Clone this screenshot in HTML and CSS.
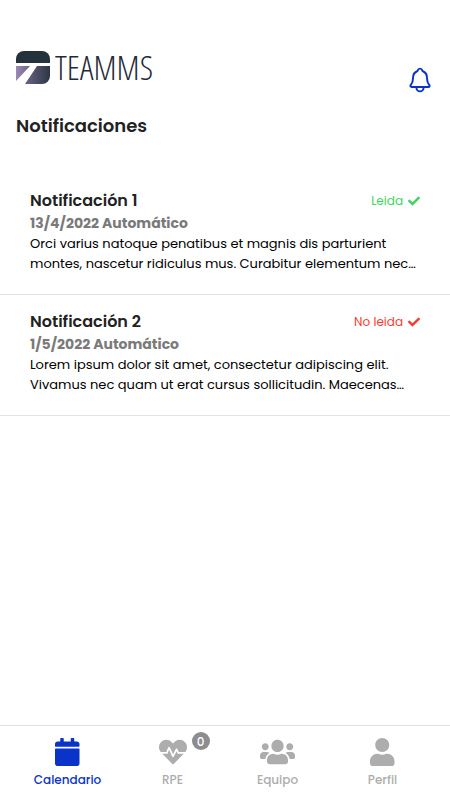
FILE: index.html
```html
<!DOCTYPE html>
<html lang="es">
  <head>
    <meta charset="utf-8" />
    <meta name="viewport" content="width=device-width, initial-scale=1" />
    <title>Notificaciones</title>
    <link rel="stylesheet" href="styles.css">
  </head>
  <body>
    <header class="header">
      <div class="brand">
        <svg class="brand-mark" viewBox="0 0 34 34" aria-hidden="true">
          <defs>
            <linearGradient id="mark-top" x1="0" y1="0" x2="1" y2="1">
              <stop offset="0" stop-color="#22303a" />
              <stop offset="1" stop-color="#26343f" />
            </linearGradient>
            <linearGradient id="mark-left" x1="0" y1="0" x2="1" y2="0">
              <stop offset="0" stop-color="#9c8bb4" />
              <stop offset="1" stop-color="#6a6284" />
            </linearGradient>
            <linearGradient id="mark-right" x1="0" y1="0" x2="1" y2="0">
              <stop offset="0" stop-color="#6c6384" />
              <stop offset="1" stop-color="#2b3745" />
            </linearGradient>
          </defs>
          <path fill="url(#mark-top)" d="M0 13V9a8 8 0 0 1 8-8h18a8 8 0 0 1 8 8v4z" />
          <path fill="url(#mark-left)" d="M0 16h14L0 31z" />
          <path fill="url(#mark-right)" d="M21 16h13v10a8 8 0 0 1-8 8H9z" />
        </svg>
        <span class="brand-name">TEAMMS</span>
      </div>
      <button class="bell-button" type="button" aria-label="Notificaciones">
        <svg class="bell-icon" viewBox="0 0 512 512" aria-hidden="true">
          <path d="M427.68 351.43C402 320 383.87 304 383.87 217.35 383.87 138 343.35 109.73 310 96c-4.43-1.82-8.6-6-9.95-10.55C294.2 65.54 277.8 48 256 48s-38.21 17.55-44 37.47c-1.35 4.6-5.52 8.71-9.95 10.53-33.39 13.75-73.87 41.92-73.87 121.35C128.13 304 110 320 84.32 351.43 73.68 364.45 83 384 101.61 384h308.88c18.51 0 27.77-19.61 17.19-32.57zM320 384v16a64 64 0 01-128 0v-16" />
        </svg>
      </button>
    </header>

    <main class="content">
      <h1 class="page-title">Notificaciones</h1>
      <ul class="notification-list">
        <li class="notification">
          <div class="notification-head">
            <h2 class="notification-title">Notificación 1</h2>
            <span class="status status-read">
              Leida
              <svg class="status-icon" viewBox="0 0 512 512" aria-hidden="true">
                <path d="M173.898 439.404l-166.4-166.4c-9.997-9.997-9.997-26.206 0-36.204l36.203-36.204c9.997-9.998 26.207-9.998 36.204 0L192 312.69 432.095 72.596c9.997-9.997 26.207-9.997 36.204 0l36.203 36.204c9.997 9.997 9.997 26.206 0 36.204l-294.4 294.401c-9.998 9.997-26.207 9.997-36.204-.001z" />
              </svg>
            </span>
          </div>
          <p class="notification-date">13/4/2022 Automático</p>
          <p class="notification-text">Orci varius natoque penatibus et magnis dis parturient montes, nascetur ridiculus mus. Curabitur elementum nec…</p>
        </li>
        <li class="notification">
          <div class="notification-head">
            <h2 class="notification-title">Notificación 2</h2>
            <span class="status status-unread">
              No leida
              <svg class="status-icon" viewBox="0 0 512 512" aria-hidden="true">
                <path d="M173.898 439.404l-166.4-166.4c-9.997-9.997-9.997-26.206 0-36.204l36.203-36.204c9.997-9.998 26.207-9.998 36.204 0L192 312.69 432.095 72.596c9.997-9.997 26.207-9.997 36.204 0l36.203 36.204c9.997 9.997 9.997 26.206 0 36.204l-294.4 294.401c-9.998 9.997-26.207 9.997-36.204-.001z" />
              </svg>
            </span>
          </div>
          <p class="notification-date">1/5/2022 Automático</p>
          <p class="notification-text">Lorem ipsum dolor sit amet, consectetur adipiscing elit. Vivamus nec quam ut erat cursus sollicitudin. Maecenas…</p>
        </li>
      </ul>
    </main>

    <nav class="tab-bar">
      <a class="tab active" href="#calendario">
        <svg class="tab-icon" viewBox="0 0 448 512" aria-hidden="true">
          <path d="M12 192h424c6.6 0 12 5.4 12 12v260c0 26.5-21.5 48-48 48H48c-26.5 0-48-21.5-48-48V204c0-6.6 5.4-12 12-12zm436-44v-36c0-26.5-21.5-48-48-48h-48V12c0-6.6-5.4-12-12-12h-40c-6.6 0-12 5.4-12 12v52H160V12c0-6.6-5.4-12-12-12h-40c-6.6 0-12 5.4-12 12v52H48C21.5 64 0 85.5 0 112v36c0 6.6 5.4 12 12 12h424c6.6 0 12-5.4 12-12z" />
        </svg>
        <span class="tab-label">Calendario</span>
      </a>
      <a class="tab" href="#rpe">
        <svg class="tab-icon" viewBox="0 0 512 512" aria-hidden="true">
          <path d="M320.2 243.8l-49.7 99.4c-6 12.1-23.4 11.7-28.9-.6l-56.9-126.3-30 71.7H60.6l182.5 186.5c7.1 7.3 18.6 7.3 25.7 0L451.4 288H342.3l-22.1-44.2zM473.7 73.9l-2.4-2.5c-51.5-52.6-135.8-52.6-187.4 0L256 100l-27.9-28.5c-51.5-52.7-135.9-52.7-187.4 0l-2.4 2.4C-10.4 123.7-12.5 203 31 256h102.4l35.9-86.2c5.4-12.9 23.6-13.2 29.4-.4l58.2 129.3 49-97.9c5.9-11.8 22.7-11.8 28.6 0l27.6 55.2H481c43.5-53 41.4-132.3-7.3-182.1z" />
        </svg>
        <span class="tab-badge">0</span>
        <span class="tab-label">RPE</span>
      </a>
      <a class="tab" href="#equipo">
        <svg class="tab-icon" viewBox="0 0 640 512" aria-hidden="true">
          <path d="M96 224c35.3 0 64-28.7 64-64s-28.7-64-64-64-64 28.7-64 64 28.7 64 64 64zm448 0c35.3 0 64-28.7 64-64s-28.7-64-64-64-64 28.7-64 64 28.7 64 64 64zm32 32h-64c-17.6 0-33.5 7.1-45.1 18.6 40.3 22.1 68.9 62 75.1 109.4h66c17.7 0 32-14.3 32-32v-32c0-35.3-28.7-64-64-64zm-256 0c61.9 0 112-50.1 112-112S381.9 32 320 32 208 82.1 208 144s50.1 112 112 112zm76.8 32h-8.3c-20.8 10-43.9 16-68.5 16s-47.6-6-68.5-16h-8.3C179.6 288 128 339.6 128 403.2V432c0 26.5 21.5 48 48 48h288c26.5 0 48-21.5 48-48v-28.8c0-63.6-51.6-115.2-115.2-115.2zm-223.7-13.4C161.5 263.1 145.6 256 128 256H64c-35.3 0-64 28.7-64 64v32c0 17.7 14.3 32 32 32h65.9c6.3-47.4 34.9-87.3 75.2-109.4z" />
        </svg>
        <span class="tab-label">Equipo</span>
      </a>
      <a class="tab" href="#perfil">
        <svg class="tab-icon" viewBox="0 0 448 512" aria-hidden="true">
          <path d="M224 256c70.7 0 128-57.3 128-128S294.7 0 224 0 96 57.3 96 128s57.3 128 128 128zm89.6 32h-16.7c-22.2 10.2-46.9 16-72.9 16s-50.6-5.8-72.9-16h-16.7C60.2 288 0 348.2 0 422.4V464c0 26.5 21.5 48 48 48h352c26.5 0 48-21.5 48-48v-41.6c0-74.2-60.2-134.4-134.4-134.4z" />
        </svg>
        <span class="tab-label">Perfil</span>
      </a>
    </nav>
  </body>
</html>
```

FILE: styles.css
```css
:root {
  --primary-color: #0a34c9;
  --read-color: #3fd45f;
  --unread-color: #fa3a2e;
  --text-title: #222;
  --text-date: #7a7a7a;
  --text-tab: #adadad;
  --badge-color: #8c8c91;
  --border-color: #e2e2e2;
}

* {
  box-sizing: border-box;
}

body {
  display: flex;
  flex-direction: column;
  min-height: 100vh;
  margin: 0;
  background: #fff;
  color: #000;
  font-family: Poppins, Inter, sans-serif;
  font-size: 13px;
  line-height: 20px;
}

h1,
h2,
p,
ul {
  margin: 0;
  padding: 0;
}

/* Header */
.header {
  display: flex;
  justify-content: space-between;
  align-items: flex-end;
  padding: 50px 16px 0;
}

.brand {
  display: flex;
  align-items: center;
  gap: 5px;
  margin-bottom: 10px;
}

.brand-mark {
  width: 34px;
  height: 34px;
}

.brand-name {
  color: #1f2b38;
  font-family: 'Open Sans Condensed Light', 'Open Sans Condensed', 'Open Sans', sans-serif;
  font-size: 34px;
  font-weight: 300;
  line-height: 34px;
}

.bell-button {
  padding: 0;
  border: none;
  background: none;
  cursor: pointer;
}

.bell-icon {
  display: block;
  width: 28px;
  height: 28px;
  fill: none;
  stroke: var(--primary-color);
  stroke-width: 36;
  stroke-linecap: round;
  stroke-linejoin: round;
}

/* Notifications */
.content {
  flex: 1;
}

.page-title {
  padding: 20px 16px 36px;
  color: var(--text-title);
  font-size: 18px;
  font-weight: 600;
  line-height: 24px;
}

.notification-list {
  list-style: none;
}

.notification {
  padding: 15px 30px 20px;
  border-bottom: 1px solid var(--border-color);
}

.notification-head {
  display: flex;
  justify-content: space-between;
  align-items: center;
}

.notification-title {
  color: var(--text-title);
  font-size: 16px;
  font-weight: 600;
  line-height: 24px;
}

.status {
  display: flex;
  align-items: center;
  gap: 5px;
  font-size: 12px;
}

.status-read {
  color: var(--read-color);
}

.status-unread {
  color: var(--unread-color);
}

.status-icon {
  width: 12px;
  height: 12px;
  fill: currentColor;
}

.notification-date {
  color: var(--text-date);
  font-size: 14px;
  font-weight: 700;
  line-height: 21px;
}

/* Bottom tabs */
.tab-bar {
  position: sticky;
  bottom: 0;
  display: flex;
  height: 75px;
  padding: 12px 15px 0;
  border-top: 1px solid var(--border-color);
  background: #fff;
}

.tab {
  position: relative;
  display: flex;
  flex: 1;
  flex-direction: column;
  align-items: center;
  gap: 4px;
  color: var(--text-tab);
  font-size: 12px;
  font-weight: 500;
  text-decoration: none;
}

.tab.active {
  color: var(--primary-color);
}

.tab-icon {
  height: 28px;
  fill: currentColor;
}

.tab-badge {
  position: absolute;
  top: -6px;
  left: calc(50% + 19px);
  width: 18px;
  height: 18px;
  border-radius: 50%;
  background: var(--badge-color);
  color: #fff;
  line-height: 19px;
  text-align: center;
}
```
